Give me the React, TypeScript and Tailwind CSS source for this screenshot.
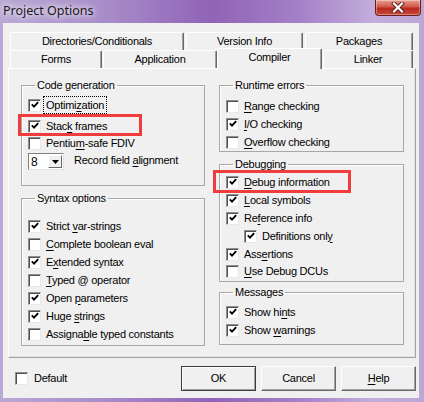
import React from "react";

const font = "font-['Liberation_Sans',Arial,sans-serif] text-[11px] tracking-[-0.25px] text-black";

const Check = ({ on }: { on?: boolean }) => (
  <span className="w-[13px] h-[13px] shrink-0 bg-white border border-t-[#8f8f8f] border-l-[#8f8f8f] border-r-[#e8e8e8] border-b-[#e8e8e8] shadow-[inset_1px_1px_0_#505050] flex items-center justify-center">
    {on && (
      <svg width="8" height="8" viewBox="0 0 8 8">
        <polyline points="0.8,3.4 3,5.6 7.2,1.2" fill="none" stroke="#000" strokeWidth="1.9" />
      </svg>
    )}
  </span>
);

const U = ({ c }: { c: string }) => <span className="underline underline-offset-[2px]">{c}</span>;

const Row = ({ on, children, h = "h-[18px]", className = "" }: { on?: boolean; children: React.ReactNode; h?: string; className?: string }) => (
  <div className={`flex items-center gap-[5px] ${h} ${className}`}>
    <Check on={on} />
    <span className="whitespace-nowrap leading-[13px]">{children}</span>
  </div>
);

const Group = ({ title, className = "", children }: { title: string; className?: string; children: React.ReactNode }) => (
  <fieldset className={`border border-[#a8a8a8] shadow-[inset_1px_1px_0_#ffffff] ${className}`}>
    <legend className="ml-[7px] px-[2px] leading-[13px]">{title}</legend>
    {children}
  </fieldset>
);

const Tab = ({ label, w, className = "" }: { label: string; w: string; className?: string }) => (
  <div
    className={`${w} h-[18px] shrink-0 bg-[#f0f0f0] border-l border-t border-white border-r border-r-[#696969] shadow-[inset_-1px_0_0_#a0a0a0] rounded-t-[2px] flex items-center justify-center ${className}`}
  >
    {label}
  </div>
);

const Btn = ({ children, def }: { children: React.ReactNode; def?: boolean }) => (
  <button
    className={`w-[75px] h-[25px] bg-[#f0f0f0] flex items-center justify-center ${
      def
        ? "border border-[#3c3c3c] shadow-[inset_1px_1px_0_#fff,inset_-1px_-1px_0_#a0a0a0]"
        : "border border-t-white border-l-white border-r-[#696969] border-b-[#696969] shadow-[inset_-1px_-1px_0_#a0a0a0]"
    }`}
  >
    {children}
  </button>
);

export default function App() {
  return (
    <div className={`relative w-[424px] h-[402px] flex flex-col bg-[linear-gradient(90deg,#b9a8d4_0%,#a88cc9_25%,#9063b6_50%,#a47fc6_70%,#c2addb_88%,#bba6d6_100%)] ${font}`}>
      {/* title bar */}
      <div className="h-[23px] shrink-0 flex items-center pl-[3px] relative">
        <span className="font-['Noto_Sans',sans-serif] text-[12.5px] tracking-normal text-[#1a1a1a] [text-shadow:0_0_6px_#fff,0_0_10px_#fff]">
          Project Options
        </span>
        <div className="absolute top-0 right-[3px] w-[46px] h-[16px] rounded-b-[4px] border border-t-0 border-[#6a201a] bg-[linear-gradient(180deg,#e7a093_0%,#d0574a_45%,#b8291d_55%,#c9473a_100%)] shadow-[inset_0_0_0_1px_rgba(255,255,255,0.35)] flex items-center justify-center">
          <svg width="14" height="11" viewBox="0 0 14 11">
            <path d="M3 1.5 L11 9.5 M11 1.5 L3 9.5" stroke="#5a1a14" strokeWidth="4" strokeLinecap="square" />
            <path d="M3 1.5 L11 9.5 M11 1.5 L3 9.5" stroke="#ffffff" strokeWidth="2.2" strokeLinecap="square" />
          </svg>
        </div>
      </div>

      {/* client area */}
      <div className="ml-[3px] w-[416px] h-[375px] bg-[#f0f0f0] flex flex-col">
        <div className="ml-[5px] mt-[9px] w-[408px] flex flex-col">
          {/* back row of tabs */}
          <div className="flex gap-[2px] ml-[2px]">
            <Tab label="Directories/Conditionals" w="w-[174px]" />
            <Tab label="Version Info" w="w-[117px]" />
            <Tab label="Packages" w="w-[108px]" />
          </div>
          {/* front row of tabs */}
          <div className="flex items-start h-[18px] ml-[2px]">
            <Tab label="Forms" w="w-[92px]" />
            <Tab label="Application" w="w-[114px]" className="ml-[1px]" />
            <Tab label="Compiler" w="w-[105px]" className="!h-[21px] -mt-[2px] relative z-10 pb-[3px]" />
            <Tab label="Linker" w="w-[90px]" className="ml-[1px]" />
          </div>

          {/* tab page */}
          <div className="h-[290px] border border-t-white border-l-white border-r-[#a0a0a0] border-b-[#a0a0a0] shadow-[inset_-1px_-1px_0_#e3e3e3] flex gap-[14px] pl-[12px]">
            {/* left column */}
            <div className="w-[184px] flex flex-col">
              <Group title="Code generation" className="mt-[10px] pt-[4px] pb-[15px] pl-[6px]">
                <Row on>
                  <span className="outline outline-1 outline-dotted outline-black outline-offset-[2px]">
                    Optimi<U c="z" />ation
                  </span>
                </Row>
                <Row on className="mt-[3px]">
                  Stac<U c="k" /> frames
                </Row>
                <Row h="h-[16px]">
                  Pentiu<U c="m" />-safe FDIV
                </Row>
                <div className="mt-[2px] h-[17px] flex items-center">
                  <div className="w-[36px] h-[17px] bg-white border border-t-[#808080] border-l-[#808080] border-r-[#e3e3e3] border-b-[#e3e3e3] flex items-center">
                    <span className="pl-[2px] flex-1 text-[12px]">8</span>
                    <span className="w-[14px] h-[13px] mr-[1px] bg-[#f0f0f0] border border-t-white border-l-white border-r-[#696969] border-b-[#696969] flex items-center justify-center">
                      <svg width="7" height="4" viewBox="0 0 7 4">
                        <path d="M0 0 H7 L3.5 4 Z" fill="#000" />
                      </svg>
                    </span>
                  </div>
                  <span className="ml-[10px] -mt-[2px] whitespace-nowrap">
                    Record field <U c="a" />lignment
                  </span>
                </div>
              </Group>

              <Group title="Syntax options" className="mt-[6px] pt-[12px] pb-[2px] pl-[6px]">
                <Row on>
                  Strict <U c="v" />ar-strings
                </Row>
                <Row>
                  <U c="C" />omplete boolean eval
                </Row>
                <Row on>
                  E<U c="x" />tended syntax
                </Row>
                <Row>
                  <U c="T" />yped @ operator
                </Row>
                <Row on>
                  Open <U c="p" />arameters
                </Row>
                <Row on>
                  Huge <U c="s" />trings
                </Row>
                <Row>
                  Assigna<U c="b" />le typed constants
                </Row>
              </Group>
            </div>

            {/* right column */}
            <div className="w-[185px] flex flex-col">
              <Group title="Runtime errors" className="mt-[10px] pt-[5px] pl-[6px]">
                <Row>
                  <U c="R" />ange checking
                </Row>
                <Row on>
                  <U c="I" />/O checking
                </Row>
                <Row>
                  <U c="O" />verflow checking
                </Row>
              </Group>

              <Group title="Debugging" className="mt-[6px] pt-[2px] pb-[2px] pl-[6px]">
                <Row on>
                  <U c="D" />ebug information
                </Row>
                <Row on>
                  <U c="L" />ocal symbols
                </Row>
                <Row on>
                  Re<U c="f" />erence info
                </Row>
                <Row on className="ml-[18px]">
                  Definitions onl<U c="y" />
                </Row>
                <Row on>
                  Ass<U c="e" />rtions
                </Row>
                <Row h="h-[16px]">
                  <U c="U" />se Debug DCUs
                </Row>
              </Group>

              <Group title="Messages" className="mt-[4px] pt-[4px] pb-[5px] pl-[6px]">
                <Row on>
                  Show hi<U c="n" />ts
                </Row>
                <Row on>
                  Show <U c="w" />arnings
                </Row>
              </Group>
            </div>
          </div>
        </div>

        {/* bottom bar */}
        <div className="mt-[8px] flex items-center pl-[12px] pr-[3px]">
          <div className="flex items-center gap-[6px]">
            <Check />
            <span>Default</span>
          </div>
          <div className="ml-auto flex gap-[5px]">
            <Btn def>OK</Btn>
            <Btn>Cancel</Btn>
            <Btn>
              <U c="H" />elp
            </Btn>
          </div>
        </div>
      </div>

      {/* red annotation boxes */}
      <div className="absolute left-[18px] top-[114px] w-[124px] h-[22px] border-[3px] border-[#f03c3c] pointer-events-none" />
      <div className="absolute left-[213px] top-[170px] w-[138px] h-[23px] border-[3px] border-[#f03c3c] pointer-events-none" />
    </div>
  );
}
